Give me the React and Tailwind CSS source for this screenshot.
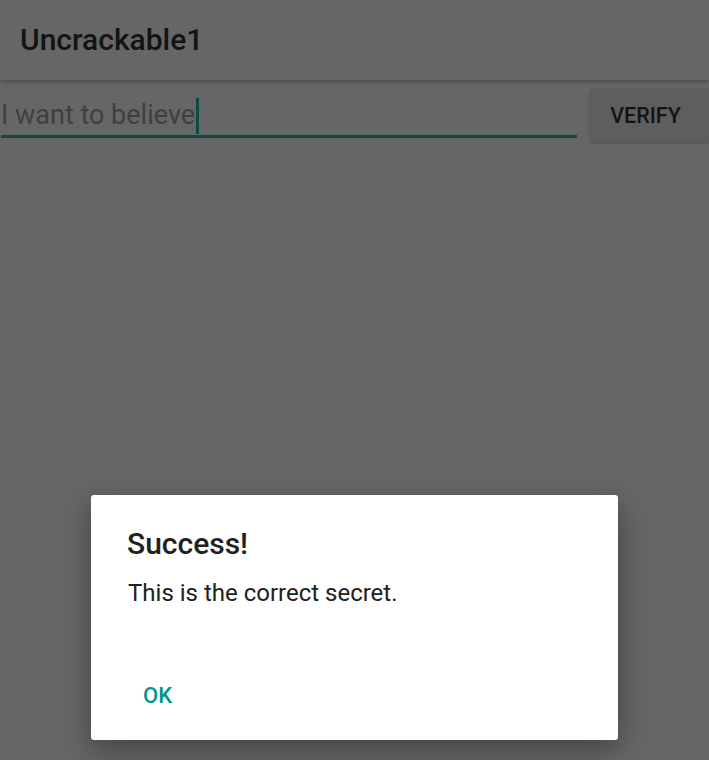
export default function App() {
  return (
    <div className="relative h-[760px] w-[709px] overflow-hidden bg-[#666666] font-['Roboto',sans-serif]">
      {/* app bar */}
      <div className="flex h-[80px] items-center bg-[#666666] pl-[20px] shadow-[0_2px_4px_rgba(0,0,0,0.25)]">
        <h1 className="text-[30px] font-medium leading-none text-[#141414]">Uncrackable1</h1>
      </div>

      {/* input row */}
      <div className="flex items-start pt-[9px]">
        <div className="relative ml-[1px] w-[576px]">
          <div className="flex h-[49px] items-center border-b-[3px] border-[#0c4a43] pt-[7px]">
            <span className="text-[27px] leading-none text-[#404040]">I want to believe</span>
            <span className="ml-[1px] h-[36px] w-[3px] bg-[#0c4a43]" />
          </div>
        </div>
        <button className="ml-[13px] flex h-[53px] flex-1 items-center justify-center rounded-l-[4px] bg-[#5e5e5e] pl-[2px] pr-[10px] pt-[2px] text-[21.5px] font-medium text-[#141414] shadow-[0_1px_3px_rgba(0,0,0,0.25)]">
          VERIFY
        </button>
      </div>

      {/* dialog */}
      <div className="absolute left-[91px] top-[495px] flex h-[245px] w-[527px] flex-col rounded-[3px] bg-white shadow-[0_10px_30px_rgba(0,0,0,0.35)]">
        <h2 className="pl-[36px] pt-[32px] text-[30px] font-medium leading-[34px] text-[#212121]">Success!</h2>
        <p className="pl-[37px] pt-[17px] text-[24px] leading-[30px] text-[#212121]">This is the correct secret.</p>
        <div className="mt-auto pb-[30px] pl-[52px]">
          <span className="text-[22px] font-medium leading-none text-[#00968a]">OK</span>
        </div>
      </div>
    </div>
  );
}
